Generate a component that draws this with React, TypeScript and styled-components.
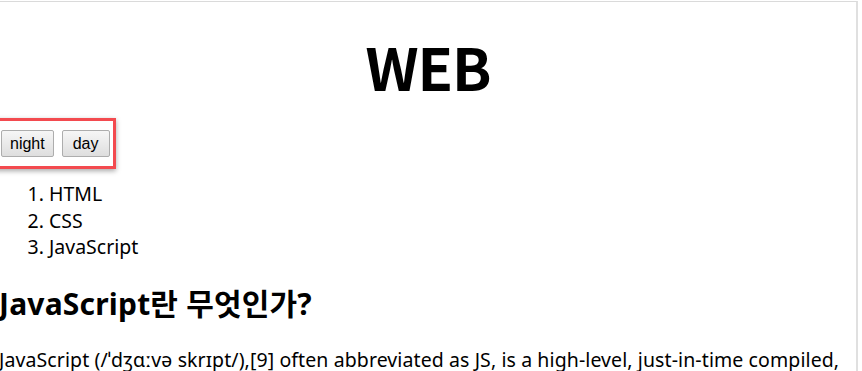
import styled, { createGlobalStyle } from "styled-components";

const Global = createGlobalStyle`
  html, body {
    margin: 0;
    padding: 0;
    background: #fff;
  }
  body {
    font-family: "Noto Sans", "Noto Sans CJK KR", sans-serif;
    color: #000;
  }
`;

const Frame = styled.div`
  width: 858px;
  height: 370px;
  border-top: 1px solid #dadada;
  border-right: 2px solid #e0e0e0;
  margin-top: 1px;
  overflow: hidden;
  box-sizing: border-box;
`;

const Title = styled.h1`
  margin: 24px 0 0;
  text-align: center;
  font-family: "Noto Sans CJK KR", "Noto Sans", sans-serif;
  font-size: 58px;
  font-weight: 700;
  line-height: 80px;
  letter-spacing: -1px;
`;

const Controls = styled.div`
  display: flex;
  gap: 8px;
  width: 126px;
  height: 51px;
  margin: 12px 0 0 -10px;
  padding: 9px 0 0 8px;
  border: 3px solid #f34a4f;
  box-shadow: 0 2px 5px rgba(0, 0, 0, 0.35);
  box-sizing: border-box;
`;

const ModeButton = styled.button<{ $pad?: number }>`
  height: 27px;
  padding: 0 ${(p) => p.$pad ?? 8}px;
  font-family: "Liberation Sans", Arial, sans-serif;
  font-size: 16px;
  color: #000;
  background: linear-gradient(#f6f6f6, #dedede);
  border: 1px solid #adadad;
  border-radius: 2px;
`;

const Menu = styled.ol`
  margin: 12px 0 0;
  padding-left: 49px;
  font-size: 19.5px;
  line-height: 26.5px;
`;

const Heading = styled.h2`
  margin: 23px 0 0 -1px;
  font-size: 30px;
  font-weight: 700;
  line-height: 40px;
  letter-spacing: 0.2px;
`;

const Body = styled.p`
  margin: 22px 0 0 -1px;
  font-size: 19.5px;
  line-height: 27px;
  letter-spacing: 0.1px;
  width: 880px;
`;

export default function App() {
  return (
    <>
      <Global />
      <Frame>
        <Title>WEB</Title>
        <Controls>
          <ModeButton>night</ModeButton>
          <ModeButton $pad={10}>day</ModeButton>
        </Controls>
        <Menu>
          <li>HTML</li>
          <li>CSS</li>
          <li>JavaScript</li>
        </Menu>
        <Heading>JavaScript란 무엇인가?</Heading>
        <Body>
          JavaScript (/ˈdʒɑːvə skrɪpt/),[9] often abbreviated as JS, is a high-level, just-in-time compiled, object-oriented programming language that conforms to the ECMAScript specification.
        </Body>
      </Frame>
    </>
  );
}
